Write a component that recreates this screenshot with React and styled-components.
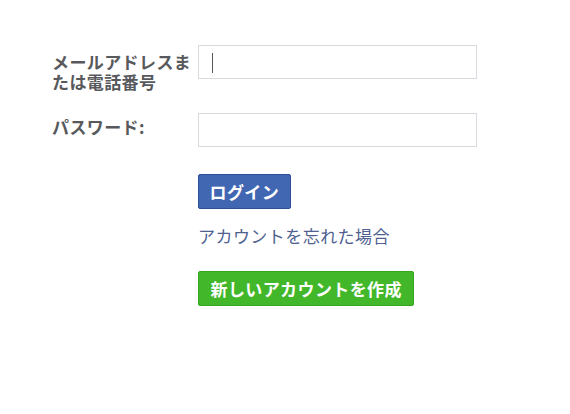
import React from "react";
import styled, { createGlobalStyle } from "styled-components";

const Global = createGlobalStyle`
  html, body { margin: 0; padding: 0; background: #fff; }
  body { font-family: "Noto Sans CJK JP", "Noto Sans", sans-serif; }
`;

const Page = styled.div`
  padding: 45px 0 0 52px;
  width: 570px;
  height: 414px;
  box-sizing: border-box;
`;

const Row = styled.div`
  display: grid;
  grid-template-columns: 146px 279px;
  align-items: start;
  margin-bottom: ${(p) => p.gap}px;
`;

const Label = styled.label`
  display: block;
  margin-top: ${(p) => p.offset}px;
  font-size: 17px;
  line-height: 20px;
  font-weight: 700;
  color: #58595c;
  letter-spacing: 0.4px;
`;

const Input = styled.div`
  position: relative;
  height: 34px;
  box-sizing: border-box;
  border: 1px solid #d8dadf;
  background: #fff;
`;

const Caret = styled.span`
  position: absolute;
  left: 13px;
  top: 7px;
  width: 1px;
  height: 20px;
  background: #555;
`;

const Actions = styled.div`
  margin-left: 146px;
  display: flex;
  flex-direction: column;
  align-items: flex-start;
`;

const Button = styled.button`
  height: 35px;
  box-sizing: border-box;
  padding: 0 ${(p) => p.pad}px;
  border: 1px solid ${(p) => p.border};
  border-radius: 2px;
  background: ${(p) => p.bg};
  color: #fff;
  font-family: "Noto Sans CJK JP", "Noto Sans", sans-serif;
  font-size: 17px;
  font-weight: 700;
  line-height: 20px;
  letter-spacing: 0.4px;
  cursor: pointer;
`;

const Link = styled.a`
  display: block;
  margin: 17px 0 25px;
  font-size: 17px;
  line-height: 20px;
  color: #4e5f90;
  text-decoration: none;
  letter-spacing: 0.45px;
`;

export default function App() {
  return (
    <>
      <Global />
      <Page>
        <Row gap={21}>
          <Label offset={7}>メールアドレスまたは電話番号</Label>
          <Input>
            <Caret />
          </Input>
        </Row>
        <Row gap={27}>
          <Label offset={4}>パスワード:</Label>
          <Input />
        </Row>
        <Actions>
          <Button bg="#4267b2" border="#2f4f94" pad={10.5}>ログイン</Button>
          <Link href="#">アカウントを忘れた場合</Link>
          <Button bg="#42b72a" border="#36a420" pad={11.5}>新しいアカウントを作成</Button>
        </Actions>
      </Page>
    </>
  );
}
